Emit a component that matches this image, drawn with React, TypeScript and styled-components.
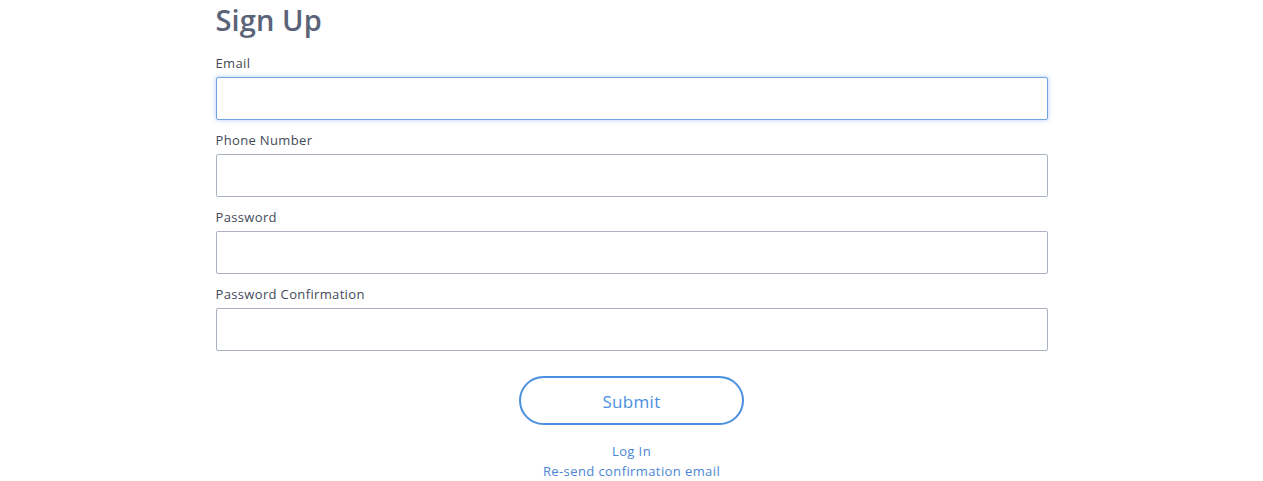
import React from "react";
import styled, { createGlobalStyle } from "styled-components";

const Global = createGlobalStyle`
  html, body { margin: 0; padding: 0; background: #ffffff; }
  body { font-family: "Open Sans", "Noto Sans", sans-serif; }
  * { box-sizing: border-box; }
`;

const Page = styled.div`
  display: flex;
  justify-content: center;
  padding-top: 2px;
`;

const Form = styled.form`
  width: 832px;
  display: flex;
  flex-direction: column;
`;

const Title = styled.h1`
  margin: 0 0 16px 0;
  font-size: 29px;
  line-height: 36px;
  font-weight: 600;
  color: #5a6378;
  letter-spacing: 0.1px;
`;

const Field = styled.div`
  display: flex;
  flex-direction: column;
  margin-bottom: 11px;
`;

const Label = styled.label`
  font-size: 13px;
  line-height: 18px;
  color: #434a5a;
  letter-spacing: 0.35px;
  margin-bottom: 5px;
`;

const Input = styled.input<{ $focused?: boolean }>`
  height: 43px;
  width: 100%;
  border: 1px solid ${(p) => (p.$focused ? "#6fa5e2" : "#aab1c0")};
  border-radius: 2px;
  box-shadow: ${(p) => (p.$focused ? "0 0 5px rgba(74,144,226,0.45)" : "none")};
  outline: none;
  font-size: 14px;
  padding: 0 10px;
  background: #fff;
`;

const Actions = styled.div`
  display: flex;
  flex-direction: column;
  align-items: center;
  margin-top: 14px;
`;

const Submit = styled.button`
  width: 225px;
  height: 49px;
  border: 2px solid #4a8fe0;
  border-radius: 25px;
  background: #fff;
  color: #4a8fe0;
  font-family: "Open Sans", "Noto Sans", sans-serif;
  font-size: 17px;
  line-height: 22px;
  padding: 2px 0 0 0;
  letter-spacing: 0.3px;
  cursor: pointer;
  margin-bottom: 16px;
`;

const LinkText = styled.a`
  font-size: 13px;
  line-height: 20px;
  color: #4a86d4;
  text-decoration: none;
  letter-spacing: 0.4px;
`;

const fields = [
  { label: "Email", type: "email", focused: true },
  { label: "Phone Number", type: "tel" },
  { label: "Password", type: "password" },
  { label: "Password Confirmation", type: "password" },
];

export default function App() {
  return (
    <>
      <Global />
      <Page>
        <Form onSubmit={(e) => e.preventDefault()}>
          <Title>Sign Up</Title>
          {fields.map((f) => (
            <Field key={f.label}>
              <Label>{f.label}</Label>
              <Input type={f.type} $focused={f.focused} />
            </Field>
          ))}
          <Actions>
            <Submit type="submit">Submit</Submit>
            <LinkText href="#">Log In</LinkText>
            <LinkText href="#">Re-send confirmation email</LinkText>
          </Actions>
        </Form>
      </Page>
    </>
  );
}
